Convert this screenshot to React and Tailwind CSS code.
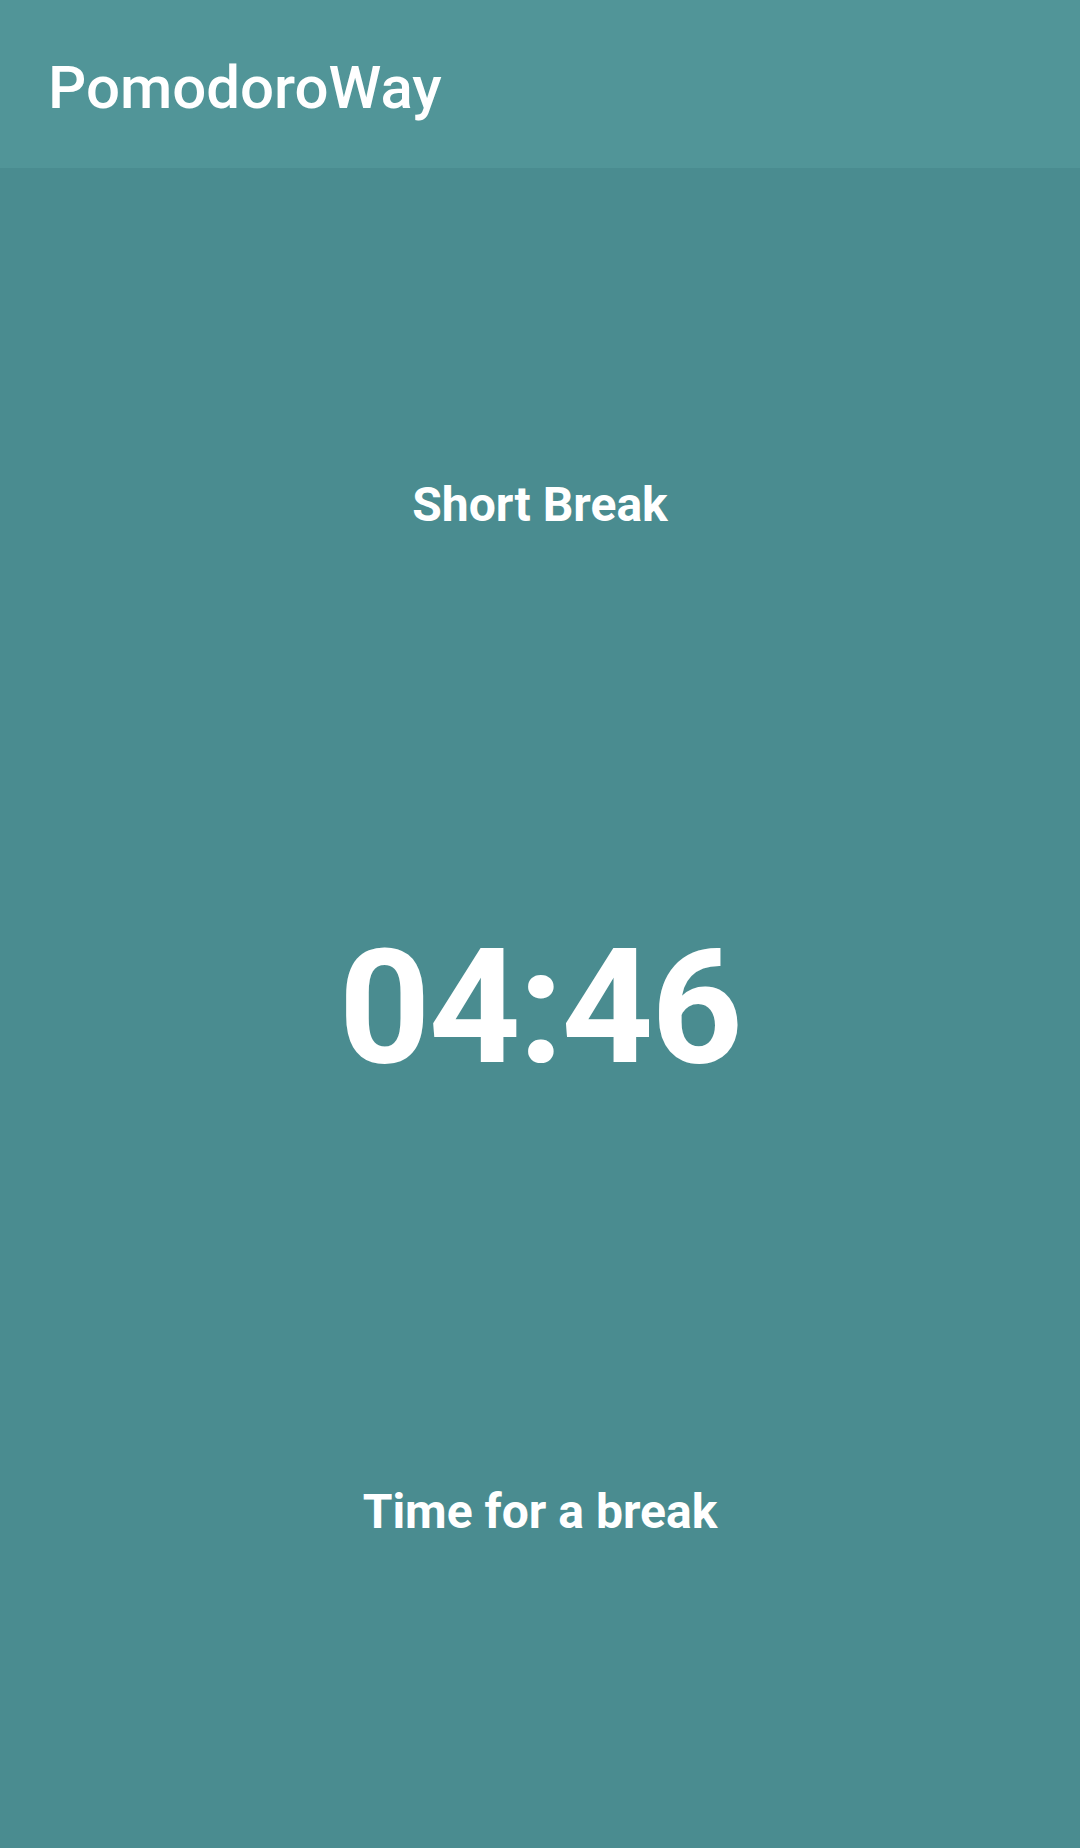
export default function App() {
  return (
    <div className="flex min-h-screen w-full flex-col bg-[#4a8c90] font-['Roboto',sans-serif] text-white">
      <header className="flex h-[168px] shrink-0 items-start bg-[#519598] px-[48px] pt-[52px]">
        <h1 className="text-[60px] font-medium leading-[1.2]">PomodoroWay</h1>
      </header>

      <main className="flex flex-1 flex-col items-center">
        <p className="pt-[308px] text-[48px] font-bold leading-[1.2]">Short Break</p>
        <p className="mt-[394px] text-[160px] font-bold leading-none tracking-[-2px]">04:46</p>
        <p className="mt-[395px] text-[48px] font-bold leading-[1.2]">Time for a break</p>
      </main>
    </div>
  );
}
